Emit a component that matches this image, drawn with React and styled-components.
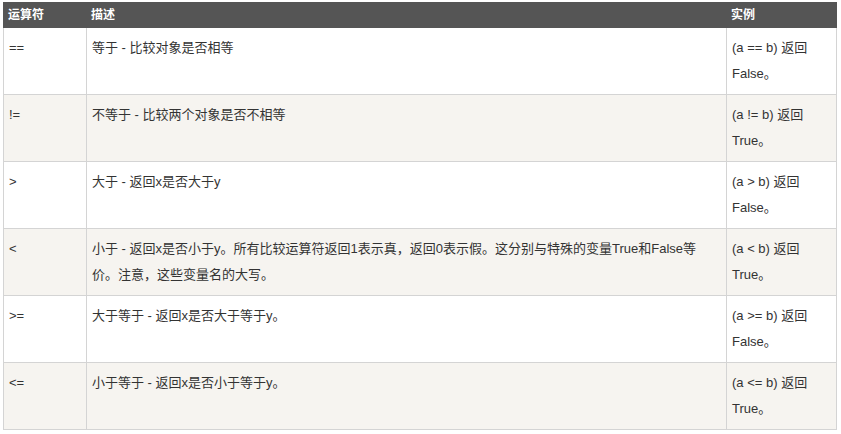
import React from "react";
import styled, { createGlobalStyle } from "styled-components";

const Global = createGlobalStyle`
  html, body { margin: 0; padding: 0; background: #fff; }
  body { font-family: "Liberation Sans", "Noto Sans CJK SC", sans-serif; color: #333; }
`;

const Page = styled.div`
  padding: 2px 5px 0 3px;
`;

const Table = styled.table`
  width: 833px;
  table-layout: fixed;
  border-collapse: collapse;
  border-spacing: 0;
  font-size: 13px;
`;

const Col = styled.col`
  width: ${(p) => p.$w}px;
`;

const Th = styled.th`
  color: #fff;
  background-color: #555;
  border: 1px solid #555;
  font-size: 12px;
  font-weight: bold;
  line-height: 18px;
  padding: 3px 4px;
  text-align: left;
  vertical-align: top;
`;

const Row = styled.tr`
  background-color: ${(p) => (p.$shaded ? "#f6f4f0" : "#fff")};
`;

const Td = styled.td`
  border: 1px solid #d4d4d4;
  line-height: 26px;
  padding: 7px 5px 7px 5px;
  vertical-align: top;
  color: #333;
  height: 52px;
`;

const rows = [
  ["==", ["等于 - 比较对象是否相等"], "(a == b) 返回 False。"],
  ["!=", ["不等于 - 比较两个对象是否不相等"], "(a != b) 返回 True。"],
  [">", ["大于 - 返回x是否大于y"], "(a > b) 返回 False。"],
  [
    "<",
    [
      "小于 - 返回x是否小于y。所有比较运算符返回1表示真，返回0表示假。这分别与特殊的变量True和False等",
      "价。注意，这些变量名的大写。",
    ],
    "(a < b) 返回 True。",
  ],
  [">=", ["大于等于 - 返回x是否大于等于y。"], "(a >= b) 返回 False。"],
  ["<=", ["小于等于 - 返回x是否小于等于y。"], "(a <= b) 返回 True。"],
];

export default function App() {
  return (
    <Page>
      <Global />
      <Table>
        <colgroup>
          <Col $w={83} />
          <Col $w={640} />
          <Col $w={110} />
        </colgroup>
        <thead>
          <tr>
            <Th>运算符</Th>
            <Th>描述</Th>
            <Th>实例</Th>
          </tr>
        </thead>
        <tbody>
          {rows.map((r, i) => (
            <Row key={i} $shaded={i % 2 === 1}>
              <Td>{r[0]}</Td>
              <Td>
                {r[1].map((line, j) => (
                  <React.Fragment key={j}>
                    {j > 0 && <br />}
                    {line}
                  </React.Fragment>
                ))}
              </Td>
              <Td>{r[2]}</Td>
            </Row>
          ))}
        </tbody>
      </Table>
    </Page>
  );
}
